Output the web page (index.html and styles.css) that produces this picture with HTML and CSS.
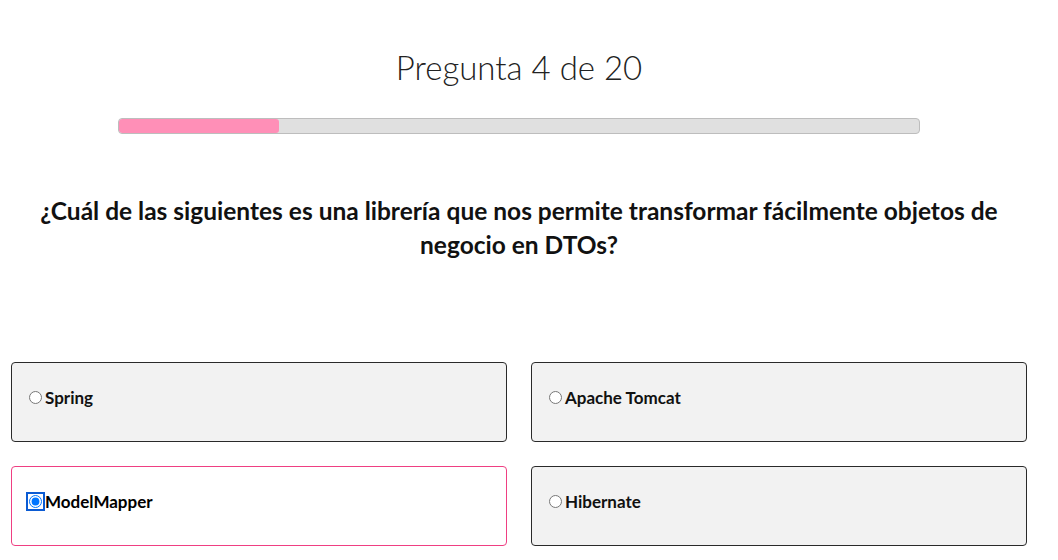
FILE: index.html
```html
<!DOCTYPE html>
<html lang="es">
<head>
<meta charset="utf-8">
<title>Quiz</title>
<link rel="stylesheet" href="styles.css">
</head>
<body>
<main class="quiz">
  <h1 class="quiz-title">Pregunta 4 de 20</h1>
  <div class="progress"><div class="progress-fill" style="width: 20%"></div></div>
  <h2 class="question">¿Cuál de las siguientes es una librería que nos permite transformar fácilmente objetos de negocio en DTOs?</h2>
  <div class="options">
    <label class="option"><input type="radio" name="q4">Spring</label>
    <label class="option"><input type="radio" name="q4">Apache Tomcat</label>
    <label class="option selected"><input type="radio" name="q4" checked class="focused">ModelMapper</label>
    <label class="option"><input type="radio" name="q4">Hibernate</label>
  </div>
</main>
</body>
</html>
```
FILE: styles.css
```css
html, body {
  margin: 0;
  padding: 0;
  background: #fff;
}
body {
  font-family: Lato, "Noto Sans", sans-serif;
  color: #161616;
}
.quiz {
  width: 1038px;
  box-sizing: border-box;
  padding: 47px 11px 0;
  display: flex;
  flex-direction: column;
  align-items: center;
}
.quiz-title {
  margin: 0;
  font-size: 33px;
  font-weight: 300;
  line-height: 40px;
  color: #222;
}
.progress {
  margin-top: 31px;
  width: 802px;
  height: 16px;
  box-sizing: border-box;
  background: #e0e0e0;
  border: 1px solid #bdbdbd;
  border-radius: 4px;
  overflow: hidden;
}
.progress-fill {
  height: 100%;
  background: #ff8fb7;
  border-radius: 3px;
}
.question {
  margin: 60px 0 0;
  font-size: 24.5px;
  font-weight: 700;
  line-height: 34px;
  text-align: center;
  color: #111;
}
.options {
  margin-top: 100px;
  width: 100%;
  display: grid;
  grid-template-columns: 1fr 1fr;
  gap: 24px;
}
.option {
  height: 80px;
  box-sizing: border-box;
  display: flex;
  align-items: center;
  padding: 0 12px 10px;
  background: #f2f2f2;
  border: 1px solid #2a2a2a;
  border-radius: 4px;
  font-size: 17px;
  font-weight: 700;
  color: #111;
  cursor: pointer;
}
.option input {
  margin: 0 3px 0 5px;
}
.option.selected {
  background: #fff;
  border-color: #ef3f82;
  color: #000;
}
.focused {
  border-radius: 50%;
  outline: 2px solid #0b5bd3;
  outline-offset: 1px;
}
```
